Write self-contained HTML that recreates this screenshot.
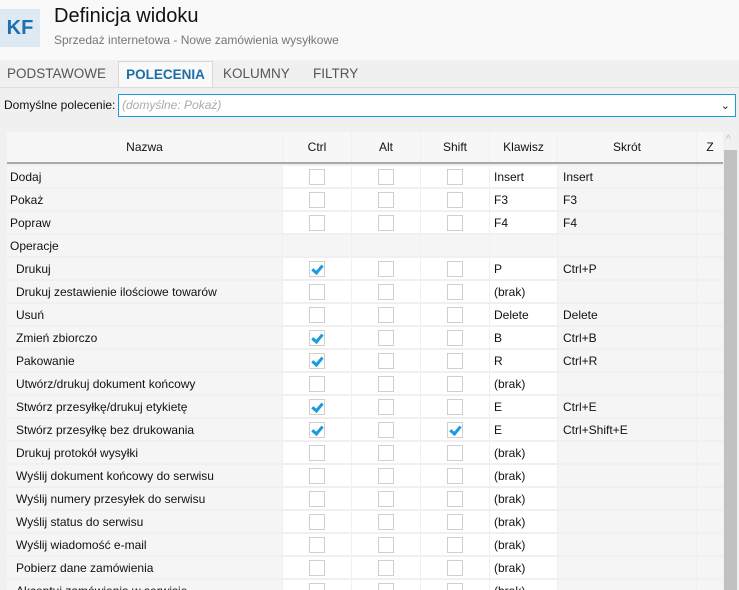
<!DOCTYPE html>
<html><head><meta charset="utf-8"><style>
*{box-sizing:border-box;margin:0;padding:0}
body{width:739px;height:590px;overflow:hidden;background:#f0f0f0;font-family:"Segoe UI","Liberation Sans","DejaVu Sans",sans-serif;font-size:12px;color:#111;position:relative}
.top{position:absolute;left:0;top:0;width:739px;height:60px;background:#f9f9f9}
.logo{position:absolute;left:0;top:9px;width:40px;height:38px;background:#dde9f3;color:#1d6fae;font-size:20px;font-weight:bold;line-height:38px;text-align:center}
.title{position:absolute;left:54px;top:5px;font-size:20px;color:#111}
.sub{position:absolute;left:54px;top:33px;font-size:12px;color:#777}
.tab{position:absolute;top:61px;height:27px;line-height:26px;font-size:13.5px;color:#555}
.tab.act{background:#f9f9f9;border:1px solid #d8d8d8;border-bottom:none;color:#1b6fa8;font-weight:bold;text-align:center}
.tabline{position:absolute;left:0;top:87px;width:739px;height:1px;background:#ddd}
.lbl{position:absolute;left:4px;top:98px;font-size:12px}
.inp{position:absolute;left:118px;top:94px;width:618px;height:23px;background:#fff;border:1px solid #1e9ad6;color:#aaa;font-style:italic;font-size:12px;line-height:21px;padding-left:3px}
.arr{position:absolute;right:5px;top:1px;color:#222;font-style:normal;font-size:11px}
.grid{position:absolute;left:7px;top:132px;width:716px;height:458px;overflow:hidden}
.row{position:absolute;left:0;height:21px}
.c{position:absolute;top:0;height:21px;line-height:22px;font-size:12px;white-space:nowrap;overflow:hidden}
.hd .c{height:30px;line-height:30px;background:#f7f7f7;text-align:center}
.cb{position:absolute;top:3px;width:16px;height:16px;border:1px solid #cfcfcf;background:#fff}
.cb.on::after{content:"";position:absolute;left:4px;top:1px;width:4px;height:8px;border:solid #1a9be0;border-width:0 3px 3px 0;transform:rotate(40deg)}
.sb{position:absolute;left:723px;top:132px;width:16px;height:458px;background:#f0f0f0}
.thumb{position:absolute;left:1px;top:18px;width:13px;height:440px;background:#c1c1c1}
.up{position:absolute;left:3px;top:2px;color:#bbb;font-size:10px}
</style></head><body>
<div class="top"><div class="logo">KF</div><div class="title">Definicja widoku</div><div class="sub">Sprzedaż internetowa - Nowe zamówienia wysyłkowe</div></div>
<div class="tab" style="left:7px">PODSTAWOWE</div>
<div class="tab act" style="left:118px;width:95px">POLECENIA</div>
<div class="tab" style="left:223px">KOLUMNY</div>
<div class="tab" style="left:313px">FILTRY</div>
<div class="tabline"></div>
<div class="lbl">Domyślne polecenie:</div>
<div class="inp">(domyślne: Pokaż)<span class="arr">&#8964;</span></div>
<div class="grid">
<div class="row hd" style="top:0;height:30px">
<div class="c" style="left:0;width:275px">Nazwa</div>
<div class="c" style="left:276px;width:68px">Ctrl</div>
<div class="c" style="left:345px;width:68px">Alt</div>
<div class="c" style="left:414px;width:68px">Shift</div>
<div class="c" style="left:483px;width:67px">Klawisz</div>
<div class="c" style="left:551px;width:138px">Skrót</div>
<div class="c" style="left:690px;width:26px">Z</div>
</div>
<div style="position:absolute;left:0;top:30px;width:716px;height:2px;background:#a9a9a9"></div>
<div id="rows"></div>
</div>
<div class="sb"><div class="up">&#94;</div><div class="thumb"></div></div>
<script>
var d=[["Dodaj",0,0,0,"Insert","Insert"],["Pokaż",0,0,0,"F3","F3"],["Popraw",0,0,0,"F4","F4"],["Operacje"],
[" Drukuj",1,0,0,"P","Ctrl+P"],[" Drukuj zestawienie ilościowe towarów",0,0,0,"(brak)",""],[" Usuń",0,0,0,"Delete","Delete"],
[" Zmień zbiorczo",1,0,0,"B","Ctrl+B"],[" Pakowanie",1,0,0,"R","Ctrl+R"],[" Utwórz/drukuj dokument końcowy",0,0,0,"(brak)",""],
[" Stwórz przesyłkę/drukuj etykietę",1,0,0,"E","Ctrl+E"],[" Stwórz przesyłkę bez drukowania",1,0,1,"E","Ctrl+Shift+E"],
[" Drukuj protokół wysyłki",0,0,0,"(brak)",""],[" Wyślij dokument końcowy do serwisu",0,0,0,"(brak)",""],
[" Wyślij numery przesyłek do serwisu",0,0,0,"(brak)",""],[" Wyślij status do serwisu",0,0,0,"(brak)",""],
[" Wyślij wiadomość e-mail",0,0,0,"(brak)",""],[" Pobierz dane zamówienia",0,0,0,"(brak)",""],[" Akceptuj zamówienia w serwisie",0,0,0,"(brak)",""]];
var h="";
d.forEach(function(r,i){var y=34+i*23;var sub=r[0][0]==" ";var g=r.length==1;
var wb=g?"#f5f5f5":"#fff";
h+='<div class="row" style="top:'+y+'px;width:716px">';
h+='<div class="c" style="left:0;width:275px;background:#f5f5f5;padding-left:'+(sub?9:3)+'px">'+r[0].trim()+'</div>';
var xs=[276,345,414];
for(var k=0;k<3;k++){h+='<div class="c" style="left:'+xs[k]+'px;width:68px;background:'+wb+'">'+(g?'':'<div class="cb'+(r[k+1]?' on':'')+'" style="left:26px"></div>')+'</div>';}
h+='<div class="c" style="left:483px;width:67px;background:'+wb+';padding-left:4px">'+(g?'':r[4])+'</div>';
h+='<div class="c" style="left:551px;width:138px;background:#f5f5f5;padding-left:5px">'+(g?'':r[5])+'</div>';
h+='<div class="c" style="left:690px;width:26px;background:#f5f5f5"></div></div>';});
document.getElementById("rows").innerHTML=h;
</script>
</body></html>
